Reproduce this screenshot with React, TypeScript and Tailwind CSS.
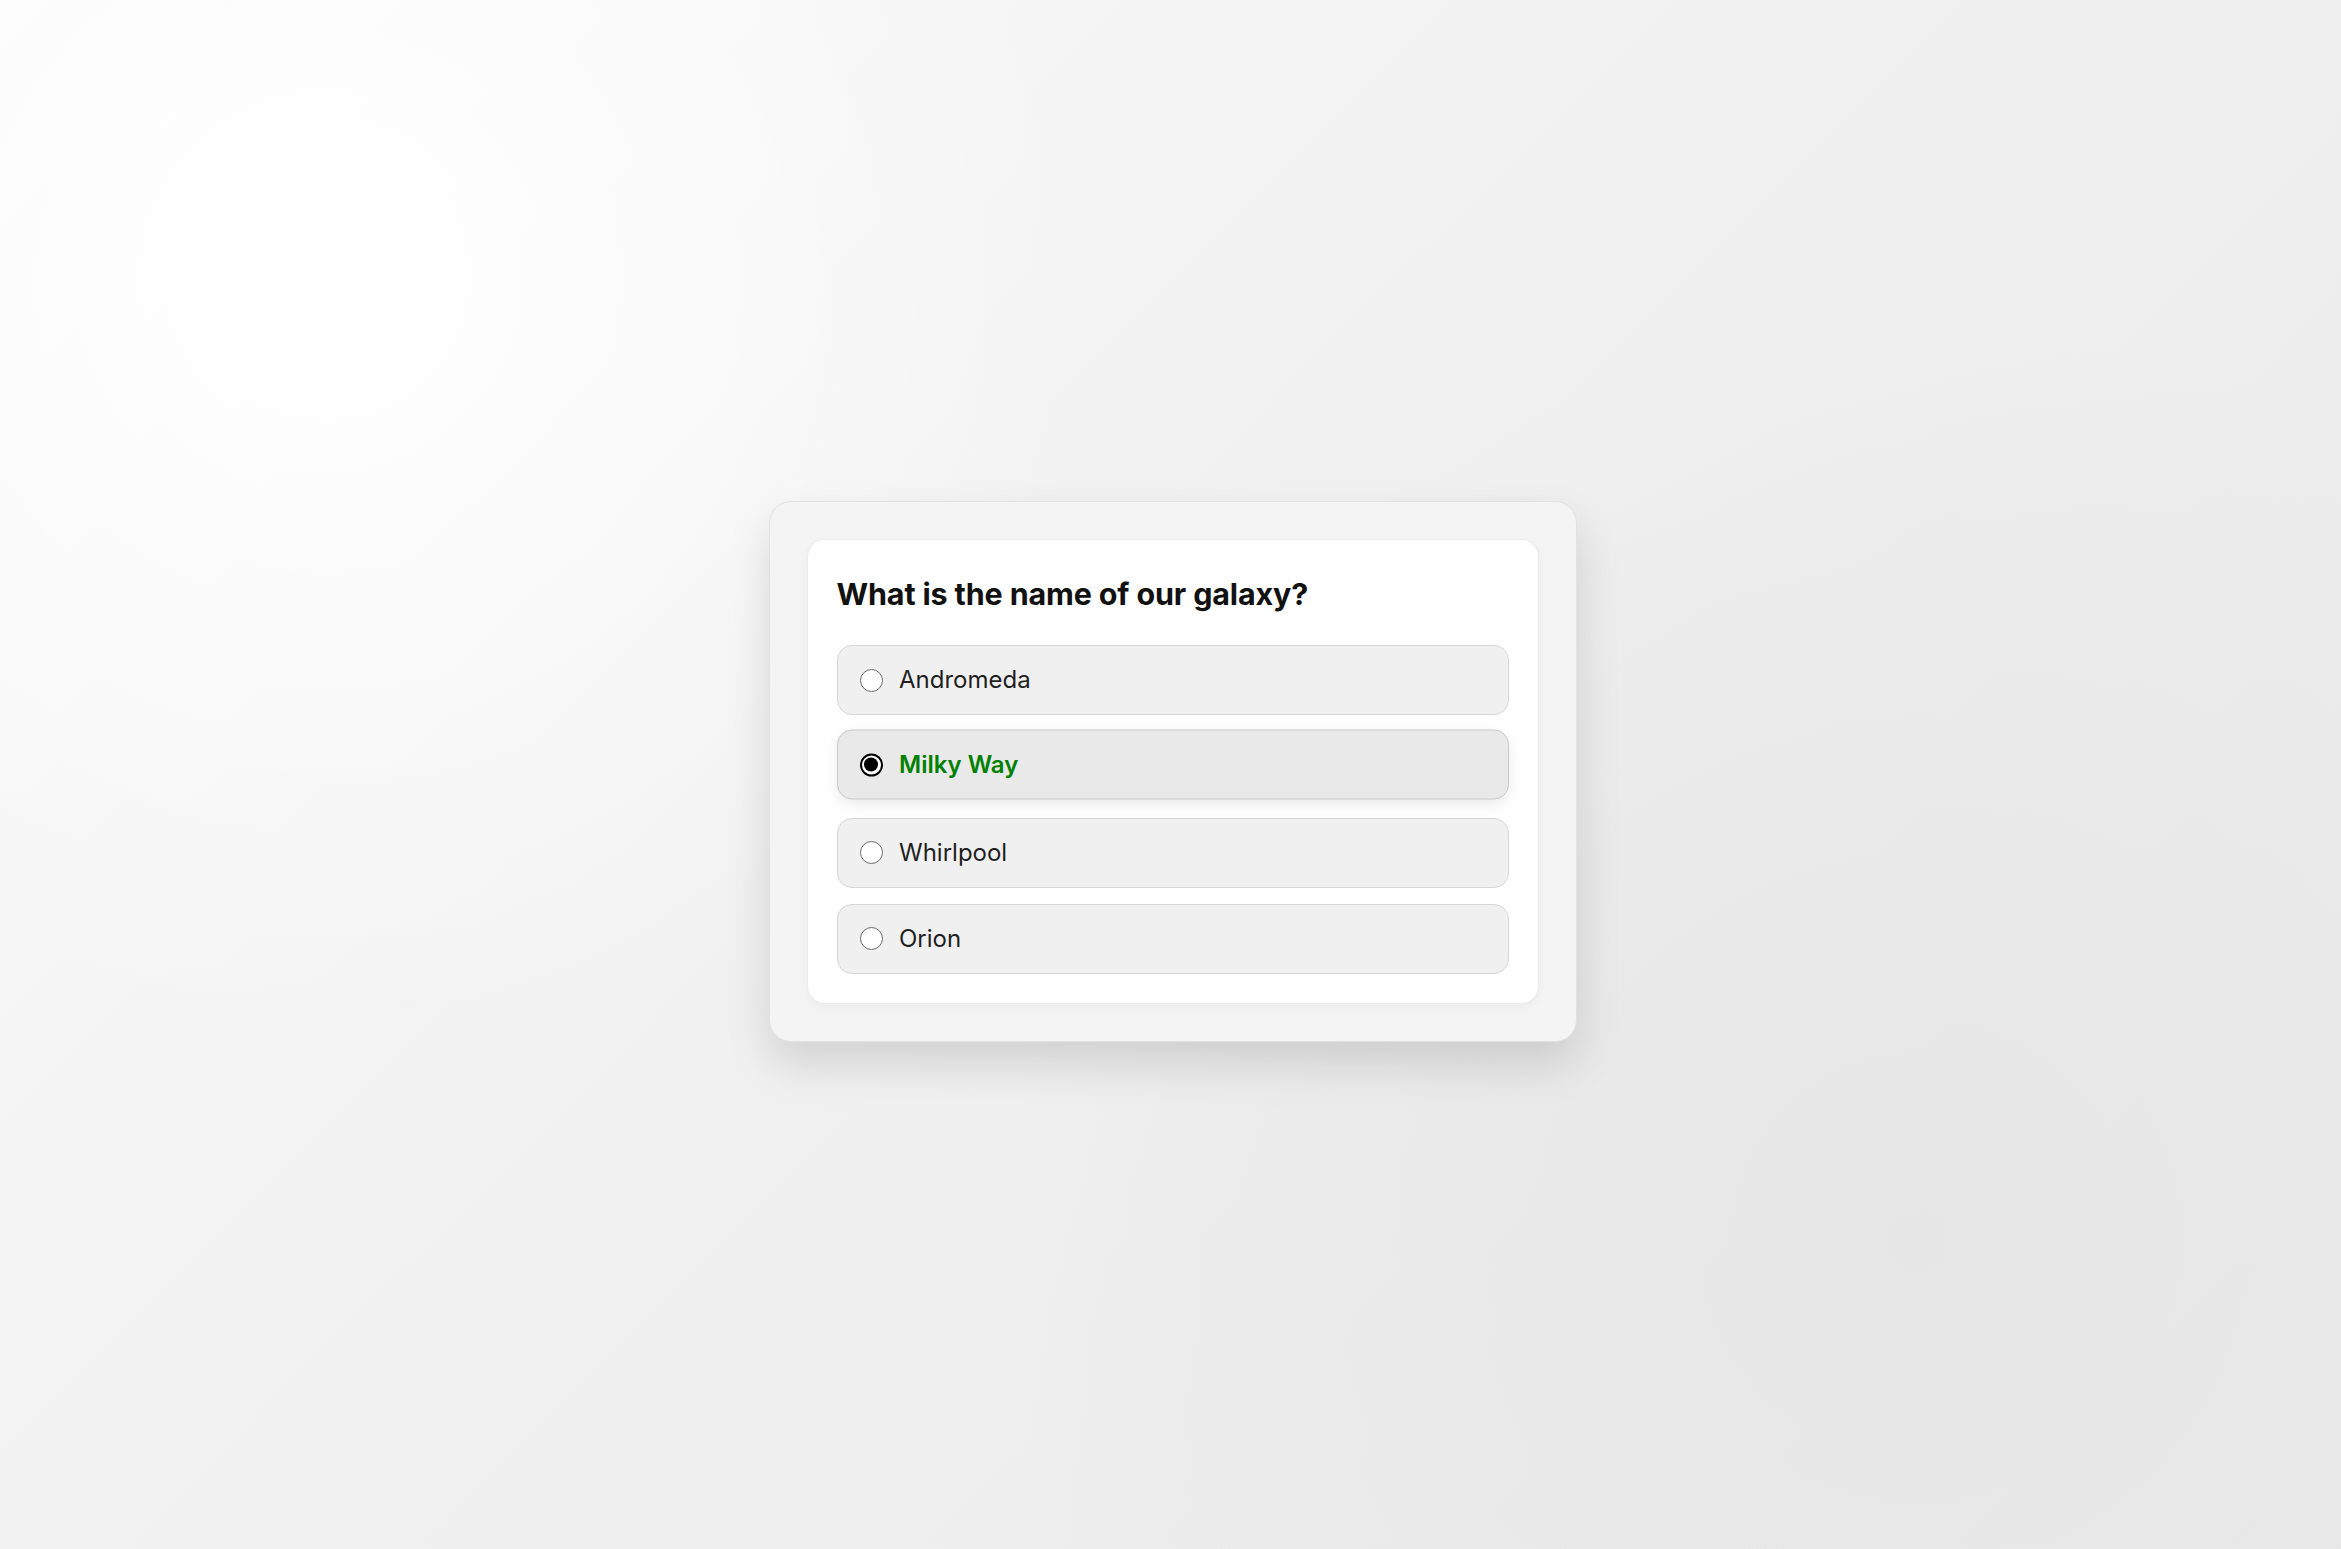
import { useState } from "react";

const OPTIONS = ["Andromeda", "Milky Way", "Whirlpool", "Orion"];

function Radio({ checked }: { checked: boolean }) {
  if (checked) {
    return (
      <span className="flex h-[23px] w-[23px] shrink-0 items-center justify-center rounded-full border-[2px] border-black bg-white">
        <span className="h-[14px] w-[14px] rounded-full bg-black" />
      </span>
    );
  }
  return <span className="h-[23px] w-[23px] shrink-0 rounded-full border-[1.75px] border-[#6a6a6a] bg-white" />;
}

export default function App() {
  const [selected, setSelected] = useState("Milky Way");

  return (
    <div
      className="flex min-h-screen w-full items-center justify-center pb-[6px] pl-[4px] font-['Inter',sans-serif]"
      style={{
        background:
          "radial-gradient(circle at 14% 18%, #ffffff 0%, rgba(255,255,255,0) 32%), radial-gradient(circle at 82% 80%, #e6e6e6 0%, rgba(230,230,230,0) 40%), linear-gradient(135deg, #fbfbfb 0%, #f1f1f1 45%, #e9e9e9 100%)",
      }}
    >
      <div className="w-[808px] rounded-[22px] border border-[#e2e2e2] bg-[#f4f4f4] p-[37px] shadow-[0_22px_45px_rgba(0,0,0,0.13)]">
        <div className="rounded-[18px] border border-[#ececec] bg-white px-[29px] pb-[29.5px] pt-[31.5px] shadow-[0_3px_10px_rgba(0,0,0,0.04)]">
          <h2 className="text-[30.5px] font-bold leading-[45px] tracking-[-0.15px] text-[#111111]">
            What is the name of our galaxy?
          </h2>
          <div className="mt-[29px] flex flex-col gap-[16.3px]">
            {OPTIONS.map((opt) => {
              const isSel = opt === selected;
              return (
                <label
                  key={opt}
                  onClick={() => setSelected(opt)}
                  className={
                    isSel
                      ? "flex h-[70px] -translate-y-[1.5px] cursor-pointer items-center gap-[16.5px] rounded-[15px] border border-[#c9c9c9] bg-[#e9e9e9] pl-[22px] shadow-[0_5px_14px_rgba(0,0,0,0.08)]"
                      : "flex h-[70px] cursor-pointer items-center gap-[16.5px] rounded-[15px] border border-[#d6d6d6] bg-[#f0f0f0] pl-[22px]"
                  }
                >
                  <Radio checked={isSel} />
                  <span
                    className={
                      isSel
                        ? "text-[24px] font-semibold text-[#008000]"
                        : "text-[24px] font-normal text-[#1f1f1f]"
                    }
                  >
                    {opt}
                  </span>
                </label>
              );
            })}
          </div>
        </div>
      </div>
    </div>
  );
}
